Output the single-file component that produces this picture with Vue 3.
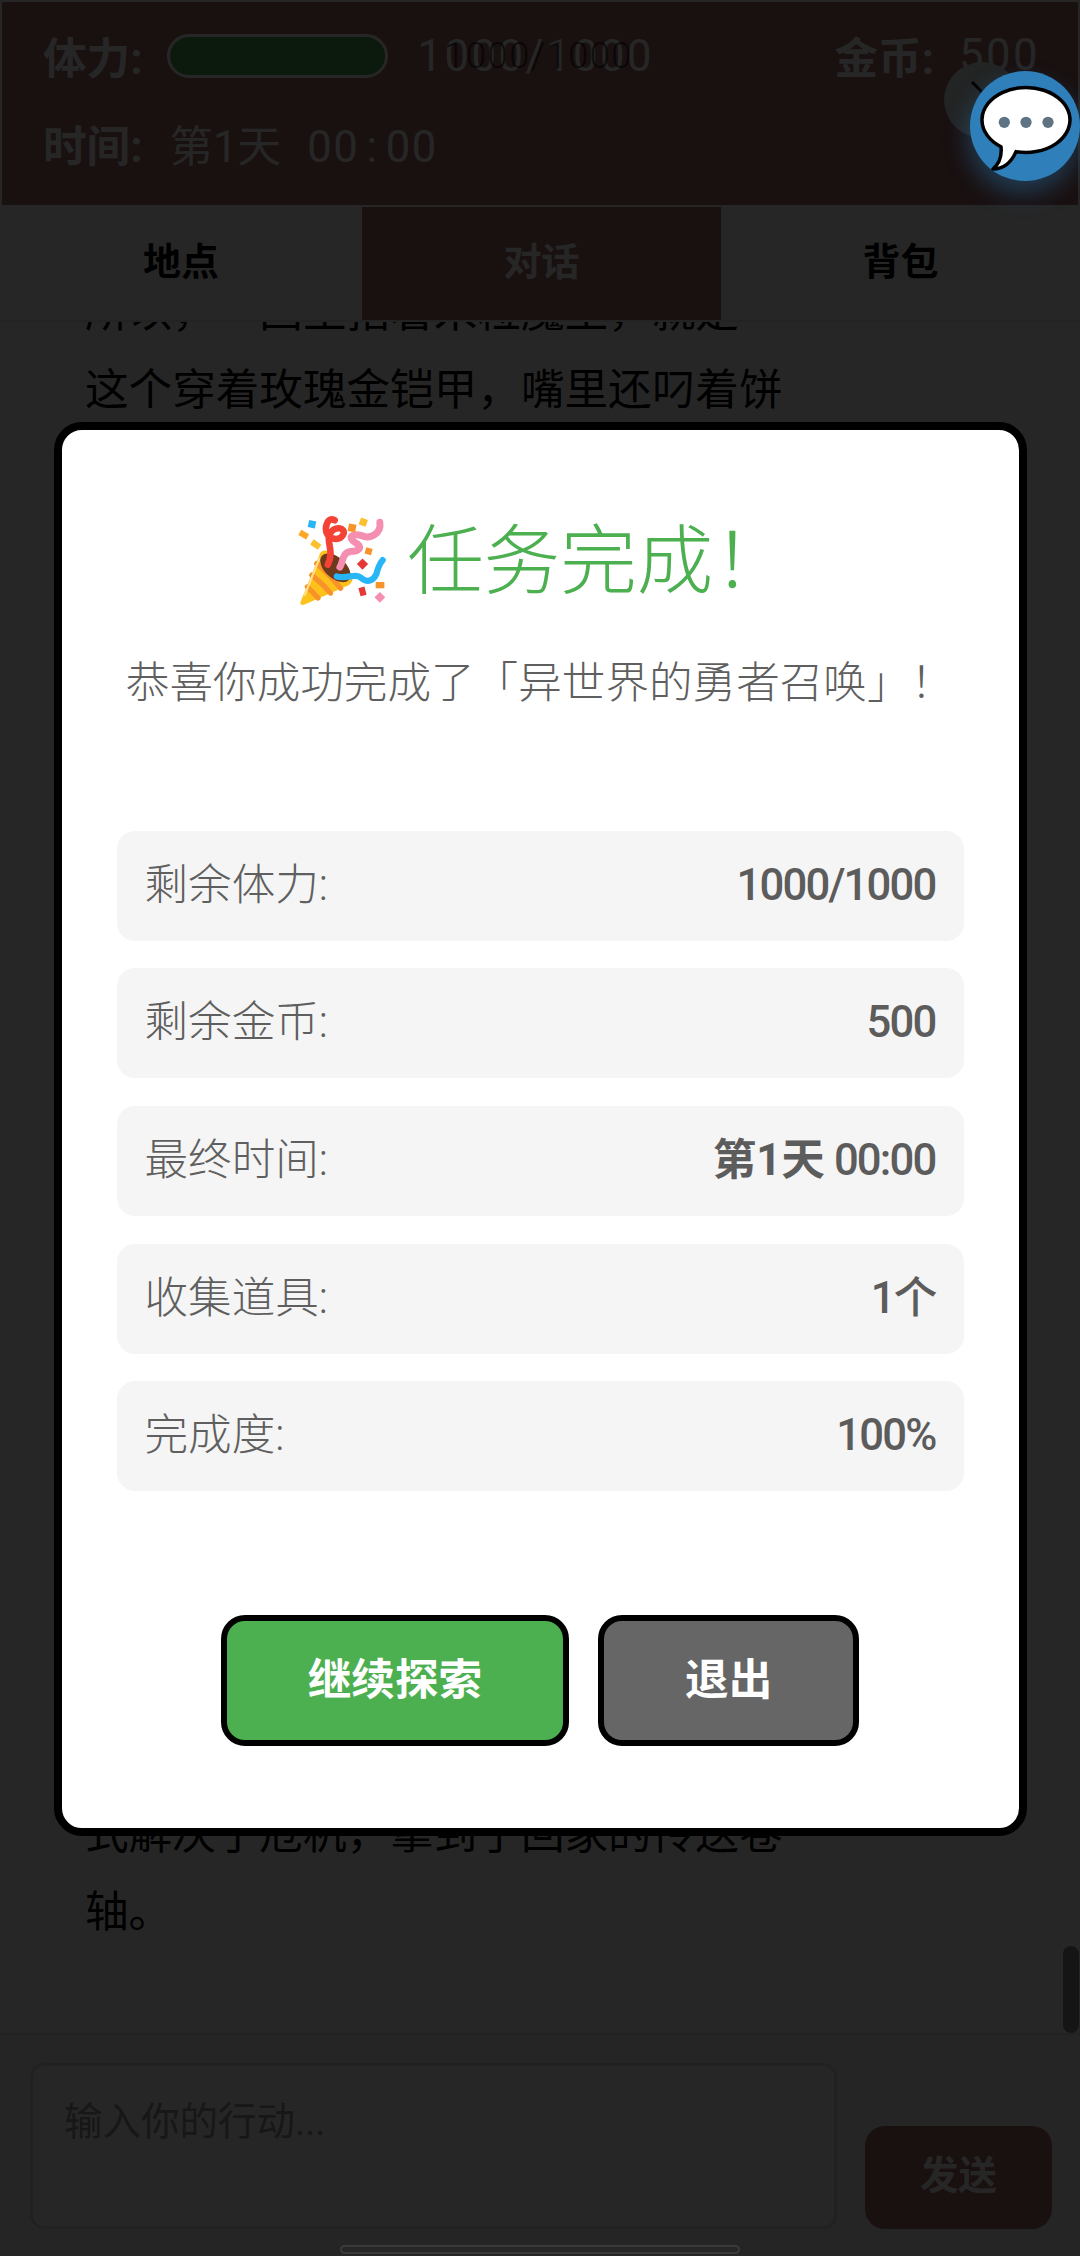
<template>
  <div class="app">
    <header class="status">
      <div class="status-row">
        <span class="status-label">体力:</span>
        <div class="hp-bar"></div>
        <span class="status-value hp-value">1000/1000<span class="hp-text">1000/1000</span></span>
        <span class="status-label gold">金币:</span>
        <span class="status-value">500</span>
      </div>
      <div class="status-row">
        <span class="status-label">时间:</span>
        <span class="status-value time"><span>第1天</span><span class="clock">00 : 00</span></span>
      </div>
    </header>

    <nav class="tabs">
      <div v-for="tab in tabs" :key="tab" :class="['tab', { active: tab === '对话' }]">{{ tab }}</div>
    </nav>

    <main class="chat">
      <div class="chat-lines">
        <div v-for="line in topLines" :key="line">{{ line }}</div>
      </div>
      <div class="chat-lines">
        <div v-for="line in bottomLines" :key="line">{{ line }}</div>
      </div>
      <div class="scroll-thumb"></div>
    </main>

    <footer class="composer">
      <div class="fake-input">输入你的行动...</div>
      <button class="send">发送</button>
    </footer>

    <div class="close-dot">
      <svg width="76" height="76" viewBox="0 0 76 76">
        <path d="M28 20 L40 32" stroke="#000" stroke-width="3" />
      </svg>
    </div>

    <div class="overlay">
      <div class="modal">
        <h1 class="modal-title">
          <svg class="party" width="88" height="91" viewBox="85 55 252 262" fill="none" stroke-linecap="round">
            <path d="M92 305 L148 165 Q155 152 172 160 Q225 190 240 235 Q243 250 228 258 L105 312 Q88 318 92 305Z" fill="#fcc21b" />
            <g stroke="#f79329" stroke-width="15">
              <path d="M111 262 Q128 278 142 294" />
              <path d="M124 228 Q155 252 178 280" />
              <path d="M138 195 Q175 225 207 266" />
            </g>
            <path d="M104 285 L146 180" stroke="#ffe28a" stroke-width="6" />
            <ellipse cx="192" cy="207" rx="52" ry="30" transform="rotate(42 192 207)" fill="#6d3a1e" />
            <path d="M190 70 Q170 60 165 90 C160 125 205 135 215 110 C222 90 190 85 175 110 C165 130 190 160 170 198" stroke="#f44336" stroke-width="19" />
            <path d="M320 76 C325 110 290 125 270 115 C240 105 225 120 250 135 C270 145 265 160 235 160 C210 165 215 190 205 205" stroke="#f48fb1" stroke-width="20" />
            <path d="M196 232 C225 240 250 222 265 235 C285 252 300 245 310 225 Q316 200 328 185" stroke="#29b6f6" stroke-width="18" />
            <g stroke="none">
              <rect x="114" y="71" width="21" height="21" transform="rotate(12 124 82)" fill="#29b6f6" />
              <rect x="88" y="103" width="26" height="17" transform="rotate(30 101 111)" fill="#ffa726" />
              <rect x="122" y="131" width="27" height="18" transform="rotate(35 135 140)" fill="#fbc02d" />
              <rect x="262" y="65" width="21" height="21" transform="rotate(20 272 75)" fill="#fbc02d" />
              <rect x="229" y="81" width="22" height="22" transform="rotate(10 240 92)" fill="#f79329" />
              <rect x="278" y="150" width="19" height="19" transform="rotate(15 288 160)" fill="#f79329" />
              <rect x="258" y="185" width="23" height="23" transform="rotate(45 270 197)" fill="#e53935" />
              <rect x="308" y="248" width="25" height="18" fill="#f79329" />
              <rect x="261" y="263" width="18" height="24" transform="rotate(-15 270 275)" fill="#e53935" />
              <rect x="309" y="281" width="22" height="22" transform="rotate(45 320 292)" fill="#f48fb1" />
            </g>
          </svg>
          <span>任务完成！</span>
        </h1>
        <p class="modal-sub">恭喜你成功完成了「异世界的勇者召唤」！</p>
        <div class="stats">
          <div v-for="row in stats" :key="row.label" class="stat-row">
            <span class="stat-label">{{ row.label }}</span>
            <span class="stat-value"><b v-if="row.strong" class="stat-strong">{{ row.strong }}</b>{{ row.value }}</span>
          </div>
        </div>
        <div class="actions">
          <button class="action green">继续探索</button>
          <button class="action gray">退出</button>
        </div>
      </div>
    </div>

    <div class="chat-fab">
      <svg width="110" height="110" viewBox="0 0 110 110">
        <path d="M46 80.6 A44 32.5 0 1 0 31 75.7 C32 85 29 93 23 98 C33 98 41 92 46 80.6Z" fill="#fff" stroke="#000" stroke-width="3.5" stroke-linejoin="round" />
        <circle cx="34.3" cy="51.3" r="5.6" fill="#5f7383" />
        <circle cx="56" cy="51.3" r="5.6" fill="#5f7383" />
        <circle cx="78" cy="51.3" r="5.6" fill="#5f7383" />
      </svg>
    </div>

    <div class="home-bar"></div>
  </div>
</template>

<script setup>
const tabs = ['地点', '对话', '背包']

const topLines = ['所以，「国王指着米粒魔王，就是', '这个穿着玫瑰金铠甲，嘴里还叼着饼']
const bottomLines = ['式解决了危机，拿到了回家的传送卷', '轴。']

const stats = [
  { label: '剩余体力:', value: '1000/1000' },
  { label: '剩余金币:', value: '500' },
  { label: '最终时间:', strong: '第1天', value: ' 00:00' },
  { label: '收集道具:', value: '1个' },
  { label: '完成度:', value: '100%' },
]
</script>

<style scoped>
.app {
  position: relative;
  display: flex;
  flex-direction: column;
  width: 1080px;
  height: 100vh;
  overflow: hidden;
  background: #fff;
  color: #000;
  font-family: Roboto, "Noto Sans CJK SC", sans-serif;
  font-size: 43.6px;
}

.status {
  box-sizing: border-box;
  height: 207px;
  padding: 31px 38px 0 41px;
  border: 2px solid #fff;
  background: #aa6a6e;
  color: #fff;
}

.status-row {
  display: flex;
  align-items: center;
  height: 44px;
  margin-bottom: 44px;
}

.status-label {
  font-weight: 700;
  margin-right: 25px;
}

.status-value {
  letter-spacing: 2.5px;
  white-space: pre;
}

.status-value.time {
  margin-left: 2px;
  letter-spacing: 0;
}

.clock {
  margin-left: 26px;
  letter-spacing: 1.5px;
  word-spacing: -5px;
}

.hp-bar {
  box-sizing: border-box;
  width: 221px;
  height: 44px;
  margin-top: 2px;
  border: 3px solid #fff;
  border-radius: 22px;
  background: #4caf50;
}

.hp-value {
  position: relative;
  top: 1px;
  margin-left: 29px;
}

.hp-text {
  position: absolute;
  left: 27px;
  top: 4px;
  color: #000;
  font-size: 36px;
  font-weight: 300;
  letter-spacing: 1.6px;
  opacity: 0.6;
}

.gold {
  margin-left: auto;
}

.tabs {
  display: grid;
  grid-template-columns: 362px 359px 359px;
  height: 113px;
  border-bottom: 2px solid #ececec;
  background: #fafafa;
}

.tab {
  display: flex;
  align-items: center;
  justify-content: center;
  padding-bottom: 10px;
  font-size: 38px;
  font-weight: 700;
}

.tab.active {
  background: #aa6a6e;
  color: #fff;
}

.chat {
  position: relative;
  flex: 1;
  display: flex;
  flex-direction: column;
  justify-content: space-between;
  min-height: 0;
  padding: 0 0 81px 85px;
  overflow: hidden;
  line-height: 78px;
  white-space: nowrap;
  text-spacing-trim: space-all;
}

.chat-lines:first-child {
  margin-top: -48px;
}

.scroll-thumb {
  position: absolute;
  right: 1px;
  bottom: 0;
  width: 16px;
  height: 87px;
  border-radius: 8px;
  background: #8c8c8c;
}

.composer {
  box-sizing: border-box;
  display: flex;
  align-items: flex-end;
  gap: 28px;
  height: 223px;
  padding: 28px 28px 27px 30px;
  border-top: 2px solid #e4e4e4;
  background: #f6f6f6;
}

.fake-input {
  box-sizing: border-box;
  width: 807px;
  height: 166px;
  padding: 26px 31px;
  border: 3px solid #dcdcdc;
  border-radius: 14px;
  background: #fff;
  color: #999;
  font-size: 38.5px;
  line-height: 60px;
}

.send {
  width: 187px;
  height: 103px;
  padding: 0 0 12px;
  border: 0;
  border-radius: 20px;
  background: #aa6a6e;
  color: #fff;
  font: inherit;
  font-size: 38.5px;
  font-weight: 700;
}

.close-dot {
  position: absolute;
  left: 944px;
  top: 62px;
  width: 76px;
  height: 76px;
  border-radius: 50%;
  background: #e6eef0;
}

.overlay {
  position: absolute;
  inset: 0;
  display: flex;
  align-items: center;
  justify-content: center;
  background: rgba(0, 0, 0, 0.85);
}

.modal {
  box-sizing: border-box;
  width: 973px;
  margin-top: 2px;
  padding: 72px 55px 82px;
  border: 8px solid #000;
  border-radius: 28px;
  background: #fff;
}

.modal-title {
  display: flex;
  align-items: center;
  justify-content: center;
  gap: 21px;
  height: 112px;
  margin: 0;
  padding-left: 8px;
  color: #4caf50;
  font-size: 76.5px;
  font-weight: 300;
}

.modal-title span {
  margin-top: -6px;
}

.party {
  flex: none;
  margin-top: 5px;
}

.modal-sub {
  margin: 35px 0 113px;
  color: #5f5f5f;
  font-weight: 300;
  line-height: 69px;
  text-align: center;
}

.stats {
  display: flex;
  flex-direction: column;
  gap: 27.6px;
}

.stat-row {
  box-sizing: border-box;
  display: flex;
  align-items: center;
  justify-content: space-between;
  height: 110px;
  padding: 0 28px;
  border-radius: 18px;
  background: #f5f5f5;
  line-height: 60px;
}

.stat-label {
  color: #5f5f5f;
  font-weight: 300;
}

.stat-value {
  color: #5c5c5c;
  font-weight: 475;
  letter-spacing: -1.8px;
  white-space: pre;
}

.stat-strong {
  font-weight: 700;
  letter-spacing: 0;
}

.actions {
  display: flex;
  justify-content: center;
  gap: 29px;
  margin-top: 124px;
}

.action {
  height: 131px;
  padding: 0 81px 10px;
  border: 6px solid #000;
  border-radius: 24px;
  color: #fff;
  font: inherit;
  font-weight: 700;
}

.green {
  background: #4caf50;
}

.gray {
  background: #666;
}

.chat-fab {
  position: absolute;
  left: 970px;
  top: 71px;
  width: 110px;
  height: 110px;
  border-radius: 50%;
  background: #2e7fba;
  box-shadow: -2px 12px 24px rgba(46, 127, 186, 0.4);
}

.chat-fab svg {
  display: block;
}

.home-bar {
  position: absolute;
  left: 340px;
  bottom: 2px;
  box-sizing: border-box;
  width: 400px;
  height: 9px;
  border: 2px solid #3a3a3a;
  border-radius: 5px;
  background: #262626;
}
</style>

<style>
html,
body {
  margin: 0;
  background: #262626;
}
</style>
